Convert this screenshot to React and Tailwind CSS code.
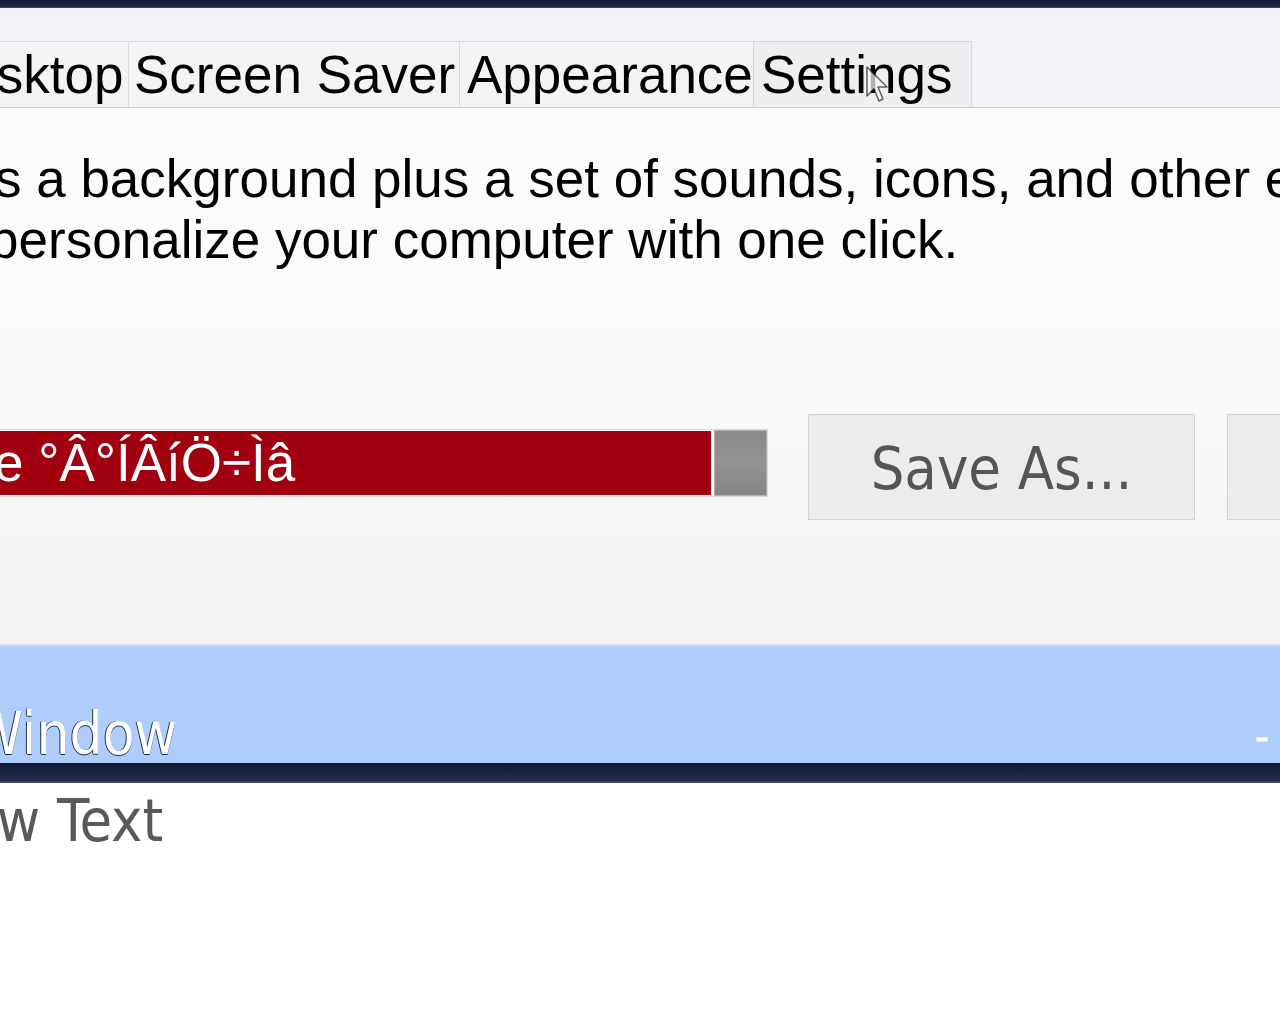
import React from 'react';

const sans = { fontFamily: '"Liberation Sans", Arial, sans-serif' };
const tahomaLike = { fontFamily: '"DejaVu Sans Condensed", "DejaVu Sans", Tahoma, sans-serif', fontStretch: 'condensed' };

const TABS = [
  { label: 'Desktop', w: 'w-[204px]', pl: 'pl-[4px]', bg: 'bg-[#f4f3f6]' },
  { label: 'Screen Saver', w: 'w-[331px]', pl: 'pl-[5px]', bg: 'bg-[#f4f3f6]' },
  { label: 'Appearance', w: 'w-[294px]', pl: 'pl-[7px]', bg: 'bg-[#f4f3f6]' },
  { label: 'Settings', w: 'w-[219px]', pl: 'pl-[7px]', bg: 'bg-[#efeff1]', last: true },
];

const Cursor = () => (
  <svg className="absolute left-[866px] top-[58px] opacity-70" width="22" height="38" viewBox="0 0 22 38">
    <path d="M1 1 L1 30 L8 23 L13 35 L17 33 L12 21 L21 21 Z" fill="#fff" stroke="#222" strokeWidth="1.5" strokeLinejoin="round" />
  </svg>
);

export default function App() {
  return (
    <div className="w-[1280px] h-[1024px] overflow-hidden bg-white" style={sans}>
      {/* top window edge */}
      <div className="h-[8px] bg-gradient-to-b from-[#161b33] to-[#20284a] border-b border-[#3a4262]" />

      {/* tab strip */}
      <div className="relative h-[100px] bg-[#f4f2f6] border-b border-[#cfcfd2] pt-[33px] overflow-hidden">
        <div className="flex -ml-[76px]">
          {TABS.map((t) => (
            <div
              key={t.label}
              className={`${t.w} ${t.pl} ${t.bg} h-[66px] shrink-0 border-l border-t border-[#d8d8da] ${t.last ? 'border-r' : ''} text-[53px] leading-[66px] text-black whitespace-nowrap`}
            >
              {t.label}
            </div>
          ))}
        </div>
        <Cursor />
      </div>

      {/* page content */}
      <div className="h-[538px] bg-gradient-to-b from-[#fcfcfe] via-[#fbfaf8] to-[#f4f3f1] border-b-[2px] border-[#dcdcdc] pt-[40px] overflow-hidden">
        <p className="-ml-[226px] text-[53px] leading-[61px] text-black whitespace-nowrap">
          A theme is a background plus a set of sounds, icons, and other elements to
          <br />
          help you personalize your computer with one click.
        </p>

        <div className="flex items-start mt-[144px] -ml-[120px]">
          <div className="mt-[15px] w-[888px] shrink-0 flex border border-[#d9d9d9] bg-white py-[1px] pl-[1px]">
            <div className="flex-1 h-[64px] bg-[#a0000f] text-white text-[53px] leading-[64px] pl-[112px] whitespace-nowrap overflow-hidden">
              e °Â°ÍÂíÖ÷Ìâ
            </div>
            <div className="ml-[3px] -my-[1px] w-[53px] h-[66px] bg-gradient-to-b from-[#8a8a8a] via-[#939393] to-[#858585] border border-[#b0b0b0]" />
          </div>

          <button
            style={tahomaLike}
            className="ml-[40px] w-[387px] h-[106px] shrink-0 bg-[#ececed] border border-[#d3d3d3] text-[59px] text-[#555555] pt-[4px]"
          >
            Save As...
          </button>
          <button
            style={tahomaLike}
            className="ml-[32px] w-[387px] h-[106px] shrink-0 bg-[#ececed] border border-[#d3d3d3] text-[59px] text-[#555555] pt-[4px]"
          >
            Delete
          </button>
        </div>
      </div>

      {/* inactive title bar preview */}
      <div className="relative h-[117px] bg-[#aecdfd] pt-[59px] overflow-hidden">
        <div
          style={tahomaLike}
          className="-ml-[252px] text-[58px] leading-[58px] text-white whitespace-nowrap [text-shadow:-1px_0_0_#1c2a4a,0_1px_0_#1c2a4a]"
        >
          Inactive Window
        </div>
        <div className="absolute left-[1256px] top-[91px] w-[12px] h-[5px] bg-white border border-[#dfe9ff]" />
      </div>

      {/* dark separator */}
      <div className="h-[20px] bg-gradient-to-b from-[#101731] via-[#1b2442] to-[#222b48] border-b-[2px] border-[#3d4560]" />

      {/* window text */}
      <div className="bg-white pt-[5px]">
        <div style={tahomaLike} className="-ml-[169px] text-[59px] leading-[66px] text-[#595959] whitespace-nowrap">
          Window Text
        </div>
      </div>
    </div>
  );
}
